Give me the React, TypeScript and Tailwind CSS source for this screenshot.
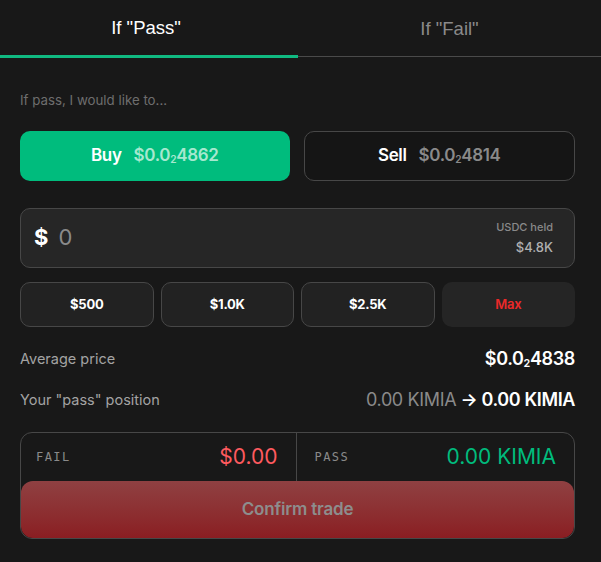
import React from "react";

function Price({ lead, sub, rest }: { lead: string; sub: string; rest: string }) {
  return (
    <span>
      {lead}
      <sub className="text-[0.6em] relative top-[0.15em]">{sub}</sub>
      {rest}
    </span>
  );
}

const QUICK = ["$500", "$1.0K", "$2.5K"];

export default function App() {
  return (
    <div
      className="w-[601px] h-[562px] bg-[#181818] text-white"
      style={{ fontFamily: "Inter, 'Noto Sans', sans-serif" }}
    >
      {/* tabs */}
      <div className="flex h-[58px]">
        <div className="w-[298px] flex flex-col">
          <div className="flex-1 flex items-center justify-center text-[18.5px] text-white pt-[1px] pr-[6px]" style={{ fontFamily: "'Liberation Sans', Arial, sans-serif" }}>
            If "Pass"
          </div>
          <div className="h-[3px] bg-[#10b981]"></div>
        </div>
        <div className="flex-1 flex flex-col">
          <div className="flex-1 flex items-center justify-center text-[18.5px] text-[#8a8a8a] pt-[1px]" style={{ fontFamily: "'Liberation Sans', Arial, sans-serif" }}>
            If "Fail"
          </div>
          <div className="h-px bg-[#4a4a4a] mb-[1px]"></div>
        </div>
      </div>

      <div className="pl-5 pr-[26px]">
        <p className="mt-[33px] text-[13.3px] text-[#6e6e6e]">If pass, I would like to...</p>

        <div className="mt-[20px] flex gap-[14px]">
          <button className="flex-1 h-[50px] rounded-[10px] bg-[#00bc7d] flex items-center justify-center gap-3 text-[17px] font-semibold tracking-[-0.02em]">
            <span className="text-white">Buy</span>
            <span className="text-[#a6e8cf]">
              <Price lead="$0.0" sub="2" rest="4862" />
            </span>
          </button>
          <button className="flex-1 h-[50px] rounded-[10px] bg-[#151515] border border-[#474747] flex items-center justify-center gap-3 text-[17px] font-semibold tracking-[-0.02em]">
            <span className="text-white">Sell</span>
            <span className="text-[#8a8a8a]">
              <Price lead="$0.0" sub="2" rest="4814" />
            </span>
          </button>
        </div>

        <div className="mt-[27px] h-[60px] rounded-[10px] bg-[#262626] border border-[#474747] flex items-center pl-[13px] pr-[21px]">
          <span className="text-[22px] font-bold text-white">$</span>
          <span className="ml-[10px] text-[22px] text-[#8a8a8a]">0</span>
          <div className="ml-auto flex flex-col items-end leading-tight">
            <span className="text-[11px] font-medium text-[#8a8a8a]">USDC held</span>
            <span className="mt-[4px] text-[13px] font-medium text-[#b0b0b0]">$4.8K</span>
          </div>
        </div>

        <div className="mt-[14px] grid grid-cols-4 gap-[7px]">
          {QUICK.map((q) => (
            <button
              key={q}
              className="h-[45px] rounded-[10px] bg-[#222222] border border-[#474747] text-[13px] font-bold text-white tracking-[-0.02em]"
            >
              {q}
            </button>
          ))}
          <button className="h-[45px] rounded-[10px] bg-[#252525] text-[13px] font-semibold text-[#ec2929] tracking-[-0.02em]">
            Max
          </button>
        </div>

        <div className="mt-[18px] flex items-center justify-between">
          <span className="text-[14.5px] text-[#a3a3a3]">Average price</span>
          <span className="text-[18px] font-semibold tracking-[-0.02em]">
            <Price lead="$0.0" sub="2" rest="4838" />
          </span>
        </div>

        <div className="mt-[14px] flex items-center justify-between">
          <span className="text-[14.5px] text-[#a3a3a3]">Your "pass" position</span>
          <span className="text-[18px] tracking-[-0.02em]">
            <span className="text-[#8a8a8a]">0.00 KIMIA</span>
            <span className="text-white font-semibold"> → 0.00 KIMIA</span>
          </span>
        </div>

        <div className="mt-[19px] rounded-[12px] border border-[#474747] overflow-hidden">
          <div className="flex h-[48px]">
            <div className="flex-1 flex items-center justify-between pl-[15px] pr-[18px] border-r border-[#474747]">
              <span className="text-[12px] tracking-[0.12em] text-[#8a8a8a]" style={{ fontFamily: "'DejaVu Sans Mono', monospace" }}>
                FAIL
              </span>
              <span className="text-[21px] text-[#ff5a5f]">$0.00</span>
            </div>
            <div className="flex-1 flex items-center justify-between pl-[18px] pr-[18px]">
              <span className="text-[12px] tracking-[0.12em] text-[#8a8a8a]" style={{ fontFamily: "'DejaVu Sans Mono', monospace" }}>
                PASS
              </span>
              <span className="text-[21px] text-[#00bc7d]">0.00 KIMIA</span>
            </div>
          </div>
          <button className="w-full h-[57px] rounded-[12px] bg-gradient-to-b from-[#8f4042] to-[#8a1d22] text-[17px] font-semibold text-[#8d8d8d] tracking-[-0.01em]">
            Confirm trade
          </button>
        </div>
      </div>
    </div>
  );
}
